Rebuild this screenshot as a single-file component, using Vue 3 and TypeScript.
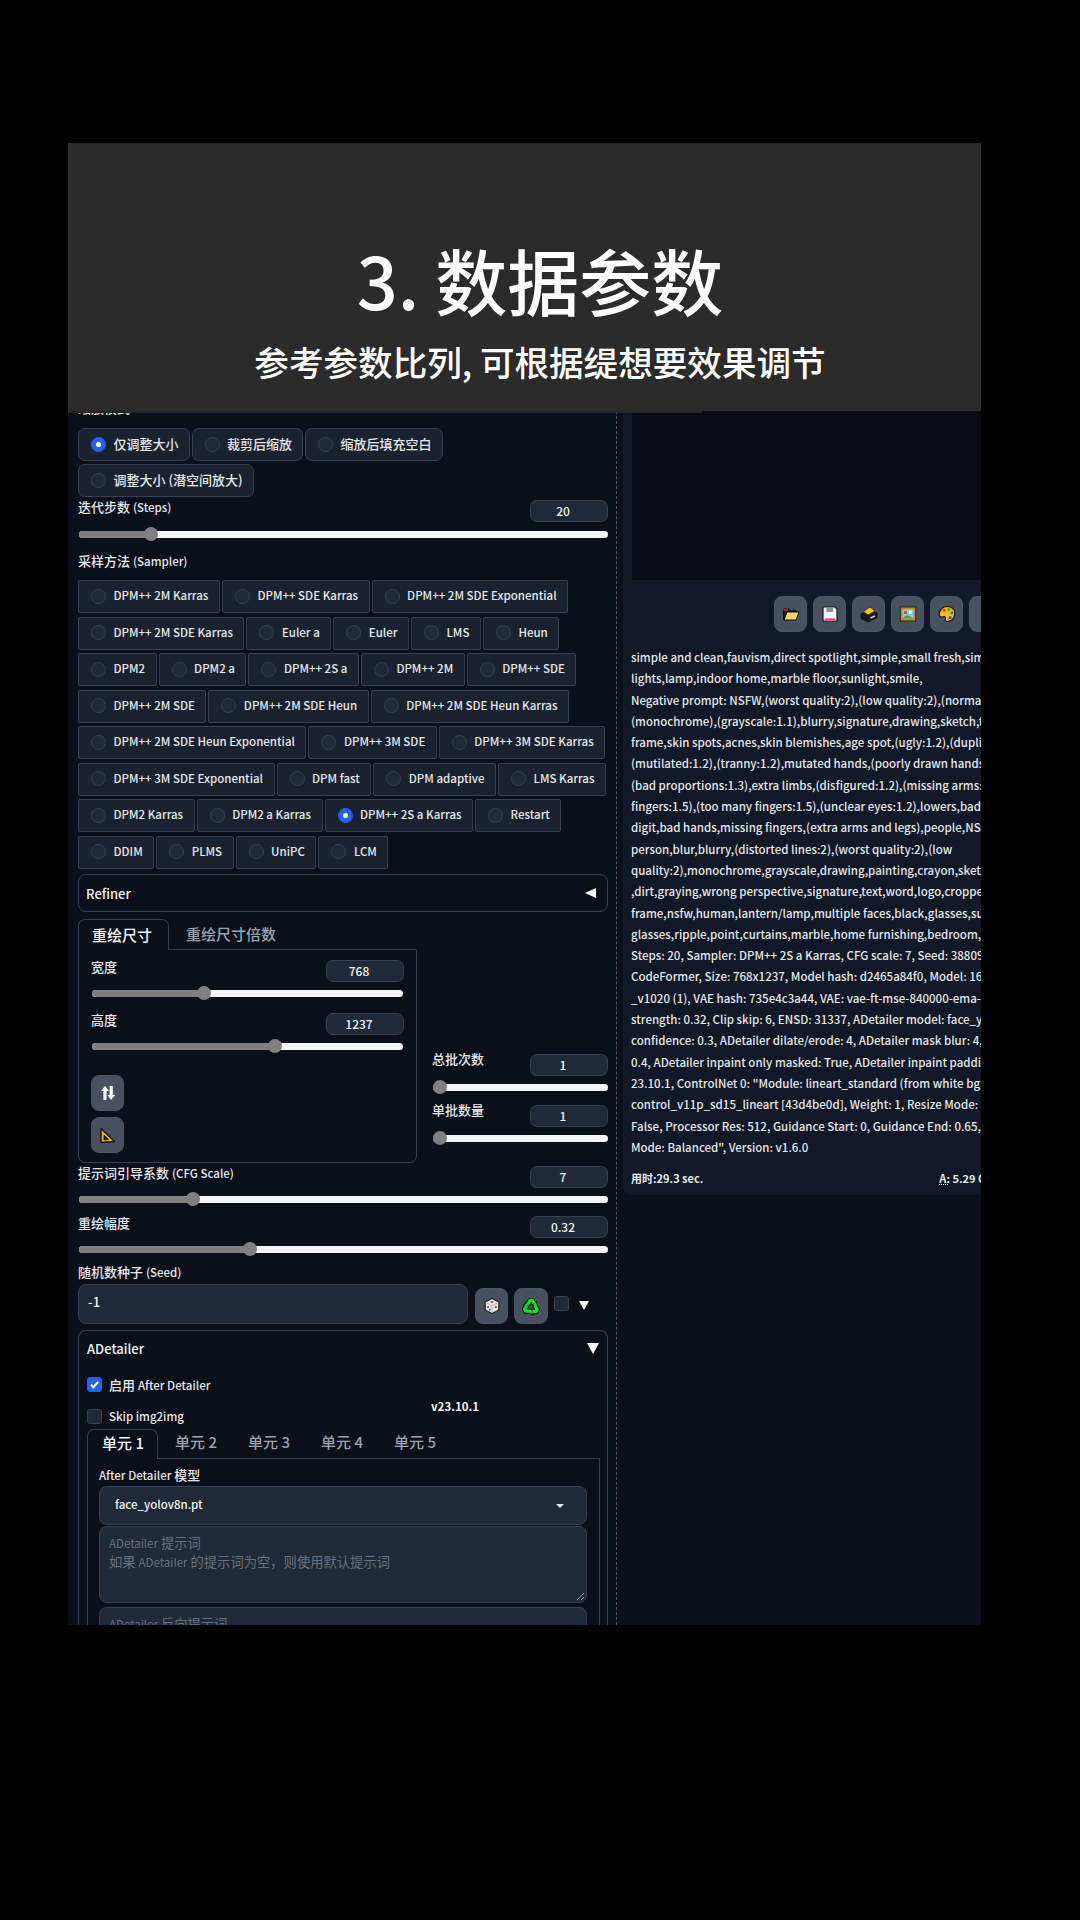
<template>
  <div class="page">
    <div class="frame">
      <header class="banner">
        <h1 class="banner-title">3. 数据参数</h1>
        <p class="banner-sub">参考参数比列, 可根据缇想要效果调节</p>
      </header>

      <div class="body">
        <section class="left">
          <div class="peek"><span>缩放模式</span></div>

          <div class="resize-group">
            <label v-for="item in resizeModes" :key="item" class="choice round">
              <span class="radio" :class="{ on: item === '仅调整大小' }"></span>{{ item }}
            </label>
          </div>

          <div v-for="s in stepSliders" :key="s.label" class="field">
            <div class="field-head">
              <span class="label">{{ s.label }} <em class="en">{{ s.en }}</em></span>
              <span class="num">{{ s.value }}</span>
            </div>
            <div class="slider mt5">
              <i class="fill" :style="{ width: s.pos + '%' }"></i>
              <i class="thumb" :style="{ left: s.pos + '%' }"></i>
            </div>
          </div>

          <div class="label sampler-label">采样方法 <em class="en">(Sampler)</em></div>
          <div class="samplers">
            <div v-for="(row, i) in samplerRows" :key="i" class="sampler-row">
              <label v-for="name in row" :key="name" class="choice">
                <span class="radio" :class="{ on: name === 'DPM++ 2S a Karras' }"></span>{{ name }}
              </label>
            </div>
          </div>

          <div class="refiner">
            <span>Refiner</span>
            <i class="tri-left"></i>
          </div>

          <div class="size-row">
            <div class="size-box">
              <div class="tabs">
                <span class="tab active">重绘尺寸</span>
                <span class="tab muted">重绘尺寸倍数</span>
              </div>
              <div class="size-panel">
                <div v-for="s in sizeSliders" :key="s.label" class="field size-field">
                  <div class="field-head">
                    <span class="label">{{ s.label }}</span>
                    <span class="num">{{ s.value }}</span>
                  </div>
                  <div class="slider inset">
                    <i class="fill" :style="{ width: s.pos + '%' }"></i>
                    <i class="thumb" :style="{ left: s.pos + '%' }"></i>
                  </div>
                </div>
                <button class="tool first">
                  <svg width="16" height="18" viewBox="0 0 16 18">
                    <path d="M5 2 L1 7 H3.4 V16 H6.6 V7 H9 Z" fill="#fff" />
                    <path d="M11 16 L15 11 H12.8 V2 H9.6 V11 H7.4 Z" fill="#fff" />
                  </svg>
                </button>
                <button class="tool">
                  <svg width="17" height="17" viewBox="0 0 17 17">
                    <path d="M2 1.5 L15.5 14.5 L2 15.5 Z" fill="#f5b400" stroke="#111" stroke-width="1.4" stroke-linejoin="round" />
                    <path d="M5 8 L9.6 12.6 L5 13 Z" fill="#1b2230" stroke="#111" stroke-width="0.8" />
                  </svg>
                </button>
              </div>
            </div>

            <div class="batch">
              <div v-for="s in batchSliders" :key="s.label" class="field batch-field">
                <div class="field-head">
                  <span class="label">{{ s.label }}</span>
                  <span class="num">{{ s.value }}</span>
                </div>
                <div class="slider">
                  <i class="fill" :style="{ width: s.pos + '%' }"></i>
                  <i class="thumb" :style="{ left: s.pos + '%' }"></i>
                </div>
              </div>
            </div>
          </div>

          <div v-for="s in cfgSliders" :key="s.label" class="field cfg-field">
            <div class="field-head">
              <span class="label">{{ s.label }} <em class="en">{{ s.en }}</em></span>
              <span class="num">{{ s.value }}</span>
            </div>
            <div class="slider">
              <i class="fill" :style="{ width: s.pos + '%' }"></i>
              <i class="thumb" :style="{ left: s.pos + '%' }"></i>
            </div>
          </div>

          <div class="label seed-label">随机数种子 <em class="en">(Seed)</em></div>
          <div class="seed-row">
            <div class="seed-input">-1</div>
            <button class="tool">
              <svg width="18" height="18" viewBox="0 0 18 18">
                <path d="M9 1.5 L15.8 5 V13 L9 16.5 L2.2 13 V5 Z" fill="#e8e8e8" stroke="#222" stroke-width="1.2" stroke-linejoin="round" />
                <path d="M2.6 5.3 L9 8.8 L15.4 5.3 M9 8.8 V16" fill="none" stroke="#a8a8a8" stroke-width="0.8" />
                <ellipse cx="9" cy="5" rx="1.5" ry="1" fill="#d83a3a" />
                <circle cx="5" cy="10" r="0.9" fill="#333" />
                <circle cx="6.8" cy="12.6" r="0.9" fill="#333" />
                <circle cx="12.8" cy="10" r="0.9" fill="#333" />
              </svg>
            </button>
            <button class="tool wide">
              <svg width="20" height="20" viewBox="0 0 20 20">
                <g v-for="deg in [0, 120, 240]" :key="deg" :transform="`rotate(${deg} 10 11)`">
                  <path d="M6.4 9 L9 4.4 H11.4 L13 7.4" fill="none" stroke="#06140a" stroke-width="5" stroke-linejoin="round" />
                  <path d="M11 8.4 L15.4 5.6 L15.8 10.4 Z" fill="#06140a" stroke="#06140a" stroke-width="1.6" stroke-linejoin="round" />
                </g>
                <g v-for="deg in [0, 120, 240]" :key="'g' + deg" :transform="`rotate(${deg} 10 11)`">
                  <path d="M6.4 9 L9 4.4 H11.4 L13 7.4" fill="none" stroke="#16e02e" stroke-width="3.2" stroke-linejoin="round" />
                  <path d="M11.4 8.2 L15.2 6.2 L15.4 9.8 Z" fill="#16e02e" />
                </g>
              </svg>
            </button>
            <span class="check seed-check"></span>
            <i class="tri-down small"></i>
          </div>

          <div class="adetailer">
            <div class="ad-title">
              <span>ADetailer</span>
              <i class="tri-down"></i>
            </div>
            <div class="ad-options">
              <div class="ad-checks">
                <label class="check-row">
                  <span class="check on">
                    <svg width="11" height="11" viewBox="0 0 11 11"><path d="M2 5.8 L4.4 8.2 L9 3" fill="none" stroke="#fff" stroke-width="2" /></svg>
                  </span><span>启用 <em class="en">After Detailer</em></span>
                </label>
                <label class="check-row"><span class="check"></span><em class="en">Skip img2img</em></label>
              </div>
              <span class="version">v23.10.1</span>
            </div>

            <div class="unit-tabs">
              <span v-for="(u, i) in units" :key="u" class="unit-tab" :class="{ active: i === 0 }">{{ u }}</span>
            </div>
            <div class="unit-panel">
              <div class="label model-label"><em class="en">After Detailer</em> 模型</div>
              <div class="dropdown">
                <span>face_yolov8n.pt</span>
                <i class="caret"></i>
              </div>
              <div class="prompt">
                <div><em class="en">ADetailer</em> 提示词</div>
                <div>如果 <em class="en">ADetailer</em> 的提示词为空，则使用默认提示词</div>
                <svg class="grip" width="9" height="9" viewBox="0 0 9 9">
                  <path d="M8 1 L1 8 M8 5 L5 8" stroke="#9ca3af" stroke-width="1" />
                </svg>
              </div>
              <div class="prompt">
                <div><em class="en">ADetailer</em> 反向提示词</div>
              </div>
            </div>
          </div>
        </section>

        <div class="divider"></div>

        <section class="right">
          <div class="output">
            <div class="gallery"></div>
            <div class="actions">
              <button class="tool">
                <svg width="18" height="18" viewBox="0 0 18 18">
                  <path d="M1.5 4 H7 L8.5 5.5 H14 V14.5 H1.5 Z" fill="#2a1608" stroke="#111" stroke-width="1" />
                  <path d="M2 15 L5 7 H17 L14 15 Z" fill="#fbd667" stroke="#111" stroke-width="1" stroke-linejoin="round" />
                  <path d="M1.6 5 H6" stroke="#e5392f" stroke-width="1.2" />
                </svg>
              </button>
              <button class="tool">
                <svg width="18" height="18" viewBox="0 0 18 18">
                  <path d="M2 2 H14 L16 4 V16 H2 Z" fill="#f1f1f1" stroke="#1a1a1a" stroke-width="1.2" />
                  <rect x="5.5" y="2.5" width="6.5" height="4.5" fill="#8a8f98" />
                  <rect x="3.5" y="9" width="11" height="6.5" fill="#fff" />
                  <rect x="3.5" y="13.4" width="11" height="2.2" fill="#e8447a" />
                </svg>
              </button>
              <button class="tool">
                <svg width="20" height="18" viewBox="0 0 20 18">
                  <path d="M2 9 L11 4.5 L18 8 V12.5 L9 17 L2 13.5 Z" fill="#1a1a1a" stroke="#111" stroke-width="1" stroke-linejoin="round" />
                  <path d="M4.5 6.5 L11 2 L16 6 L9 10 Z" fill="#f3c22f" stroke="#3a2a00" stroke-width="0.8" />
                  <path d="M11.5 13 L16 10.8" stroke="#d8d8d8" stroke-width="1.4" />
                </svg>
              </button>
              <button class="tool">
                <svg width="18" height="18" viewBox="0 0 18 18">
                  <rect x="1.2" y="2" width="15.6" height="14" fill="#d38a10" stroke="#222" stroke-width="1" />
                  <rect x="3.6" y="4.4" width="10.8" height="9.2" fill="#8ec8ee" />
                  <path d="M3.6 13.6 L8 10 L14.4 13.6 Z" fill="#2fa84a" />
                  <rect x="5" y="6" width="3" height="3" fill="#e5434a" />
                  <rect x="10" y="5.6" width="3" height="3.4" fill="#f4f4f4" />
                </svg>
              </button>
              <button class="tool">
                <svg width="18" height="18" viewBox="0 0 18 18">
                  <path d="M9.5 1.5 C4.5 1.5 1.2 5 1.2 9 C1.2 12 3.5 12.5 5.2 11.8 C7.2 11 8 12.4 7.4 14 C6.8 15.8 8.4 16.8 10.2 16.4 C14 15.6 16.8 12.6 16.8 8.4 C16.8 4.4 13.6 1.5 9.5 1.5 Z" fill="#f6bd16" stroke="#111" stroke-width="1.1" />
                  <circle cx="6.2" cy="5.2" r="1.5" fill="#e5392f" />
                  <circle cx="10.8" cy="4.4" r="1.4" fill="#2e9e44" />
                  <circle cx="14" cy="8" r="1.4" fill="#2563eb" />
                  <circle cx="12" cy="12.6" r="1.5" fill="#1d4ed8" />
                </svg>
              </button>
              <button class="tool"></button>
            </div>
            <div class="info">
              <div v-for="line in infoLines" :key="line" class="info-line">{{ line }}</div>
            </div>
            <div class="timing">
              <span>用时:29.3 sec.</span>
              <span class="vram"><u>A:</u> 5.29 GB</span>
            </div>
          </div>
        </section>
      </div>
    </div>
  </div>
</template>

<script setup lang="ts">
interface SliderItem {
  label: string;
  en?: string;
  value: string;
  pos: number;
}

const resizeModes = ['仅调整大小', '裁剪后缩放', '缩放后填充空白', '调整大小 (潜空间放大)'];

const stepSliders: SliderItem[] = [{ label: '迭代步数', en: '(Steps)', value: '20', pos: 13.6 }];

const samplerRows = [
  ['DPM++ 2M Karras', 'DPM++ SDE Karras', 'DPM++ 2M SDE Exponential'],
  ['DPM++ 2M SDE Karras', 'Euler a', 'Euler', 'LMS', 'Heun'],
  ['DPM2', 'DPM2 a', 'DPM++ 2S a', 'DPM++ 2M', 'DPM++ SDE'],
  ['DPM++ 2M SDE', 'DPM++ 2M SDE Heun', 'DPM++ 2M SDE Heun Karras'],
  ['DPM++ 2M SDE Heun Exponential', 'DPM++ 3M SDE', 'DPM++ 3M SDE Karras'],
  ['DPM++ 3M SDE Exponential', 'DPM fast', 'DPM adaptive', 'LMS Karras'],
  ['DPM2 Karras', 'DPM2 a Karras', 'DPM++ 2S a Karras', 'Restart'],
  ['DDIM', 'PLMS', 'UniPC', 'LCM']
];

const sizeSliders: SliderItem[] = [
  { label: '宽度', value: '768', pos: 36 },
  { label: '高度', value: '1237', pos: 59 }
];

const batchSliders: SliderItem[] = [
  { label: '总批次数', value: '1', pos: 4 },
  { label: '单批数量', value: '1', pos: 4 }
];

const cfgSliders: SliderItem[] = [
  { label: '提示词引导系数', en: '(CFG Scale)', value: '7', pos: 21.5 },
  { label: '重绘幅度', value: '0.32', pos: 32.4 }
];

const units = ['单元 1', '单元 2', '单元 3', '单元 4', '单元 5'];

const infoLines = [
  'simple and clean,fauvism,direct spotlight,simple,small fresh,simple',
  'lights,lamp,indoor home,marble floor,sunlight,smile,',
  'Negative prompt: NSFW,(worst quality:2),(low quality:2),(normal',
  '(monochrome),(grayscale:1.1),blurry,signature,drawing,sketch,text',
  'frame,skin spots,acnes,skin blemishes,age spot,(ugly:1.2),(duplicate',
  '(mutilated:1.2),(tranny:1.2),mutated hands,(poorly drawn hands',
  '(bad proportions:1.3),extra limbs,(disfigured:1.2),(missing arms:1.2)',
  'fingers:1.5),(too many fingers:1.5),(unclear eyes:1.2),lowers,bad hands',
  'digit,bad hands,missing fingers,(extra arms and legs),people,NSFW',
  'person,blur,blurry,(distorted lines:2),(worst quality:2),(low',
  'quality:2),monochrome,grayscale,drawing,painting,crayon,sketch',
  ',dirt,graying,wrong perspective,signature,text,word,logo,cropped',
  'frame,nsfw,human,lantern/lamp,multiple faces,black,glasses,sunglasses',
  'glasses,ripple,point,curtains,marble,home furnishing,bedroom,decor',
  'Steps: 20, Sampler: DPM++ 2S a Karras, CFG scale: 7, Seed: 38809',
  'CodeFormer, Size: 768x1237, Model hash: d2465a84f0, Model: 16',
  '_v1020 (1), VAE hash: 735e4c3a44, VAE: vae-ft-mse-840000-ema-pruned',
  'strength: 0.32, Clip skip: 6, ENSD: 31337, ADetailer model: face_yolov8n',
  'confidence: 0.3, ADetailer dilate/erode: 4, ADetailer mask blur: 4,',
  '0.4, ADetailer inpaint only masked: True, ADetailer inpaint padding',
  '23.10.1, ControlNet 0: "Module: lineart_standard (from white bg &',
  'control_v11p_sd15_lineart [43d4be0d], Weight: 1, Resize Mode: Crop',
  'False, Processor Res: 512, Guidance Start: 0, Guidance End: 0.65,',
  'Mode: Balanced", Version: v1.6.0'
];
</script>

<style>
html,
body {
  margin: 0;
  background: #000;
}
</style>

<style scoped>
.page {
  width: 1080px;
  height: 1920px;
  padding: 143px 0 0 68px;
  box-sizing: border-box;
  background: #000;
  font-family: "Noto Sans CJK SC", "Liberation Sans", sans-serif;
  color: #e5e7eb;
  overflow: hidden;
}

.frame {
  width: 913px;
  height: 1482px;
  background: #0b0f19;
  overflow: hidden;
}

.en {
  font-style: normal;
  font-size: 11.5px;
}

/* 顶部标题 */
.banner {
  position: relative;
  z-index: 1;
  height: 268px;
  padding: 100px 0 0 31px;
  box-sizing: border-box;
  background: #2b2b2b;
  text-align: center;
  color: #fff;
}

.banner::after {
  content: "";
  position: absolute;
  left: 0;
  bottom: -2px;
  width: 634px;
  height: 2px;
  background: #262626;
}

.banner-title {
  margin: 0;
  font-size: 72px;
  line-height: 72px;
  font-weight: 500;
}

.banner-sub {
  margin: 26px 0 0;
  font-size: 34.6px;
  line-height: 40px;
  font-weight: 500;
}

.body {
  display: flex;
  height: 1214px;
}

/* 左栏 */
.left {
  flex: 0 0 548px;
  box-sizing: border-box;
  padding: 0 8px 0 10px;
  overflow: hidden;
}

.label {
  font-size: 13px;
  line-height: 16px;
  font-weight: 500;
  color: #e5e7eb;
  white-space: nowrap;
}

.field-head .label {
  line-height: 14px;
}

.peek {
  height: 5px;
  margin-bottom: 12px;
  display: flex;
  align-items: flex-end;
  overflow: hidden;
  font-size: 13px;
  line-height: 16px;
  font-weight: 500;
}

.resize-group {
  display: flex;
  flex-wrap: wrap;
  gap: 3px 2px;
  width: 400px;
  margin-bottom: 3px;
}

.choice {
  display: flex;
  align-items: center;
  gap: 7.5px;
  height: 33px;
  box-sizing: border-box;
  padding: 0 10.5px 2.5px 12px;
  background: #1a2230;
  border: 1px solid #374151;
  border-radius: 2px;
  font-size: 11.5px;
  font-weight: 500;
  color: #e5e7eb;
  white-space: nowrap;
}

.choice.round {
  padding: 0 10px 2.5px 12px;
  border-radius: 7px;
  font-size: 13px;
}

.radio {
  flex: none;
  position: relative;
  width: 15px;
  height: 15px;
  margin-top: 2px;
  box-sizing: border-box;
  border-radius: 50%;
  background: #1f2937;
  border: 1px solid #374151;
}

.radio.on {
  background: #2563eb;
  border-color: #2563eb;
}

.radio.on::after {
  content: "";
  position: absolute;
  left: 4px;
  top: 4px;
  width: 5px;
  height: 5px;
  border-radius: 50%;
  background: #fff;
}

.field-head {
  display: flex;
  justify-content: space-between;
  align-items: flex-start;
  height: 22px;
}

.num {
  flex: none;
  width: 78px;
  height: 22px;
  box-sizing: border-box;
  padding-right: 12px;
  background: #1f2937;
  border: 1px solid #374151;
  border-radius: 7px;
  text-align: center;
  font-size: 12px;
  line-height: 20px;
  font-weight: 500;
  color: #f3f4f6;
}

.slider {
  position: relative;
  height: 14px;
  margin-top: 4px;
  margin-left: 1px;
}

.slider.mt5 {
  margin-top: 5px;
}

.slider::before,
.fill {
  content: "";
  position: absolute;
  left: 0;
  top: 3.5px;
  height: 7px;
  border-radius: 4px;
}

.slider::before {
  right: 0;
  background: #f3f4f6;
}

.fill {
  background: #808080;
}

.thumb {
  position: absolute;
  top: 0;
  width: 14px;
  height: 14px;
  margin-left: -7px;
  border-radius: 50%;
  background: #808080;
}

.sampler-label {
  margin-top: 12px;
  margin-bottom: 11px;
}

.samplers {
  display: flex;
  flex-direction: column;
  gap: 3.5px;
}

.sampler-row {
  display: flex;
  gap: 2px;
}

.refiner {
  display: flex;
  justify-content: space-between;
  align-items: center;
  height: 38px;
  margin-top: 5.5px;
  box-sizing: border-box;
  padding: 0 11px 0 7px;
  border: 1px solid #374151;
  border-radius: 8px;
  font-size: 13px;
  font-weight: 500;
  color: #f3f4f6;
}

.tri-left {
  width: 0;
  height: 0;
  border-top: 5.5px solid transparent;
  border-bottom: 5.5px solid transparent;
  border-right: 11px solid #fff;
}

.tri-down {
  flex: none;
  width: 0;
  height: 0;
  border-left: 6px solid transparent;
  border-right: 6px solid transparent;
  border-top: 11px solid #fff;
}

.tri-down.small {
  margin-left: 4px;
  margin-bottom: 14px;
  border-left-width: 5.5px;
  border-right-width: 5.5px;
  border-top-width: 9px;
}

/* 重绘尺寸 */
.size-row {
  display: flex;
  align-items: flex-end;
  gap: 15px;
  margin-top: 7px;
}

.size-box {
  flex: 0 0 339px;
}

.tabs {
  display: flex;
  height: 31px;
  margin-bottom: -1px;
}

.tab {
  position: relative;
  box-sizing: border-box;
  padding: 0 13px;
  font-size: 15px;
  line-height: 29px;
  font-weight: 500;
}

.tab.active {
  width: 91px;
  z-index: 1;
  background: #0b0f19;
  border: 1px solid #374151;
  border-bottom: 0;
  border-radius: 7px 7px 0 0;
  color: #f3f4f6;
}

.tab.muted {
  margin-left: 4px;
  color: #9ca3af;
}

.size-panel {
  box-sizing: border-box;
  height: 214px;
  padding: 10px 12px;
  border: 1px solid #374151;
  border-radius: 0 0 7px 7px;
}

.size-field + .size-field {
  margin-top: 13px;
}

.slider.inset {
  margin-right: 1px;
}

.tool {
  display: flex;
  align-items: center;
  justify-content: center;
  flex: none;
  width: 33px;
  height: 36px;
  padding: 0;
  background: #475160;
  border: 1px solid #4b5563;
  border-radius: 8px;
}

.tool.first {
  margin-top: 22px;
  margin-bottom: 6px;
}

.tool.wide {
  width: 34px;
}

.batch {
  flex: 1;
  margin-bottom: 18px;
}

.batch-field + .batch-field {
  margin-top: 11px;
}

.batch-field .label {
  margin-top: -2px;
}

.cfg-field {
  margin-top: 10px;
}

.size-row + .cfg-field {
  margin-top: 3px;
}

.seed-label {
  margin-top: 8px;
  margin-bottom: 4px;
}

.seed-row {
  display: flex;
  align-items: flex-end;
  gap: 6px;
  height: 40px;
}

.seed-input {
  flex: 0 0 390px;
  height: 40px;
  box-sizing: border-box;
  padding: 0 9px;
  background: #1f2937;
  border: 1px solid #374151;
  border-radius: 8px;
  font-size: 13px;
  line-height: 34px;
  font-weight: 500;
  color: #f3f4f6;
  margin-right: 1px;
}

.check {
  flex: none;
  display: inline-flex;
  align-items: center;
  justify-content: center;
  width: 15px;
  height: 15px;
  box-sizing: border-box;
  background: #1f2937;
  border: 1px solid #374151;
  border-radius: 3px;
}

.check.on {
  background: #2563eb;
  border-color: #2563eb;
}

.seed-check {
  margin-bottom: 13px;
}

/* ADetailer */
.adetailer {
  height: 400px;
  margin-top: 6px;
  box-sizing: border-box;
  padding: 0 7px 0 8px;
  border: 1px solid #374151;
  border-bottom: 0;
  border-radius: 8px 8px 0 0;
}

.ad-title {
  display: flex;
  justify-content: space-between;
  align-items: center;
  height: 34px;
  padding-right: 1px;
  font-size: 13px;
  font-weight: 500;
  color: #f3f4f6;
}

.ad-options {
  display: flex;
  align-items: flex-end;
  margin-top: 11.5px;
}

.ad-checks {
  flex: 0 0 344px;
  display: flex;
  flex-direction: column;
  gap: 15.5px;
}

.check-row {
  display: flex;
  align-items: center;
  gap: 7px;
  height: 16px;
  font-size: 13px;
  font-weight: 500;
  color: #e5e7eb;
}

.version {
  margin-bottom: 10px;
  font-size: 11.5px;
  line-height: 16px;
  font-weight: 700;
  color: #f3f4f6;
}

.unit-tabs {
  display: flex;
  gap: 2px;
  height: 30px;
  margin-top: 5px;
  margin-bottom: -1px;
}

.unit-tab {
  position: relative;
  box-sizing: border-box;
  width: 71px;
  padding-left: 15px;
  font-size: 15px;
  line-height: 26px;
  font-weight: 500;
  color: #9ca3af;
}

.unit-tab.active {
  z-index: 1;
  padding-left: 14px;
  background: #0b0f19;
  border: 1px solid #374151;
  border-bottom: 0;
  border-radius: 7px 7px 0 0;
  color: #f3f4f6;
}

.unit-panel {
  width: 513px;
  box-sizing: border-box;
  padding: 8px 12px 0 11px;
  border: 1px solid #374151;
  border-bottom: 0;
}

.model-label {
  margin-bottom: 3px;
}

.dropdown {
  display: flex;
  justify-content: space-between;
  align-items: center;
  height: 39px;
  box-sizing: border-box;
  padding: 0 22px 4px 15px;
  margin-bottom: 1px;
  background: #1f2937;
  border: 1px solid #374151;
  border-radius: 8px;
  font-size: 11.5px;
  font-weight: 500;
  color: #f3f4f6;
}

.caret {
  width: 0;
  height: 0;
  margin-top: 4px;
  border-left: 4px solid transparent;
  border-right: 4px solid transparent;
  border-top: 4px solid #e5e7eb;
}

.prompt {
  position: relative;
  height: 77px;
  box-sizing: border-box;
  padding: 7px 9px;
  margin-bottom: 4px;
  background: #1f2937;
  border: 1px solid #374151;
  border-radius: 8px;
  font-size: 13.3px;
  line-height: 18.5px;
  color: #6b7280;
}

.grip {
  position: absolute;
  right: 1px;
  bottom: 1px;
}

.divider {
  flex: 0 0 0;
  height: 100%;
  border-left: 1px dashed #4b5563;
}

/* 右栏 */
.right {
  flex: 0 0 364px;
  padding-left: 6px;
  box-sizing: border-box;
  overflow: hidden;
}

.output {
  width: 380px;
  height: 784px;
  box-sizing: border-box;
  background: #111827;
  border-radius: 0 0 0 8px;
}

.gallery {
  height: 169px;
  margin-left: 9px;
  background: #080b14;
}

.actions {
  display: flex;
  gap: 6px;
  padding: 16px 0 0 151px;
}

.info {
  margin-top: 15px;
  padding-left: 8px;
  font-size: 11.5px;
  line-height: 21.3px;
  font-weight: 500;
  color: #e5e7eb;
}

.info-line {
  white-space: nowrap;
}

.timing {
  display: flex;
  margin-top: 11.5px;
  padding-left: 8px;
  font-size: 11px;
  line-height: 16px;
  font-weight: 700;
  color: #e5e7eb;
  white-space: nowrap;
}

.vram {
  margin-left: 236px;
}

.vram u {
  text-decoration: underline dotted;
}
</style>
